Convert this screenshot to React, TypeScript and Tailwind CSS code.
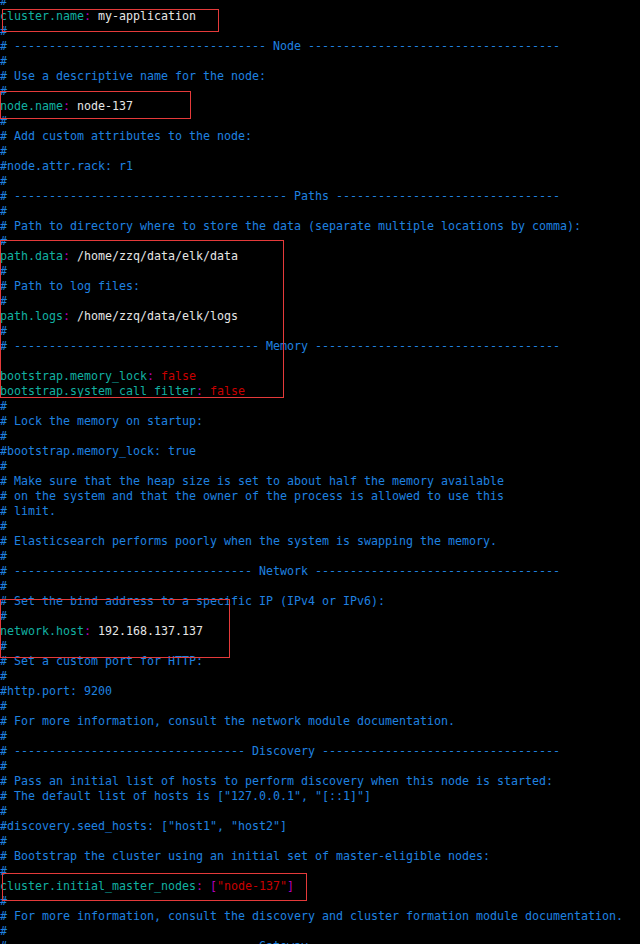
import React from "react";

type Seg = { t: string; c: "c" | "k" | "p" | "v" | "r" | "m" };

const colors: Record<Seg["c"], string> = {
  c: "text-[#1f82e0]",
  k: "text-[#12b0a2]",
  p: "text-[#b400bb]",
  v: "text-[#e6e6e6]",
  r: "text-[#c80000]",
  m: "text-[#b400bb]",
};

const dash = (n: number) => "-".repeat(n);
const header = (before: number, title: string, after: number): Seg[] => [
  { t: `# ${dash(before)} ${title} ${dash(after)}`, c: "c" },
];
const cm = (t: string): Seg[] => [{ t, c: "c" }];
const kv = (k: string, v: string, red = false): Seg[] => [
  { t: k, c: "k" },
  { t: ":", c: "p" },
  { t: " ", c: "v" },
  { t: v, c: red ? "r" : "v" },
];

const lines: Seg[][] = [
  cm("#"),
  kv("cluster.name", "my-application"),
  cm("#"),
  header(36, "Node", 36),
  cm("#"),
  cm("# Use a descriptive name for the node:"),
  cm("#"),
  kv("node.name", "node-137"),
  cm("#"),
  cm("# Add custom attributes to the node:"),
  cm("#"),
  cm("#node.attr.rack: r1"),
  cm("#"),
  header(39, "Paths", 32),
  cm("#"),
  cm("# Path to directory where to store the data (separate multiple locations by comma):"),
  cm("#"),
  kv("path.data", "/home/zzq/data/elk/data"),
  cm("#"),
  cm("# Path to log files:"),
  cm("#"),
  kv("path.logs", "/home/zzq/data/elk/logs"),
  cm("#"),
  header(35, "Memory", 35),
  [],
  kv("bootstrap.memory_lock", "false", true),
  kv("bootstrap.system call filter", "false", true),
  cm("#"),
  cm("# Lock the memory on startup:"),
  cm("#"),
  cm("#bootstrap.memory_lock: true"),
  cm("#"),
  cm("# Make sure that the heap size is set to about half the memory available"),
  cm("# on the system and that the owner of the process is allowed to use this"),
  cm("# limit."),
  cm("#"),
  cm("# Elasticsearch performs poorly when the system is swapping the memory."),
  cm("#"),
  header(34, "Network", 35),
  cm("#"),
  cm("# Set the bind address to a specific IP (IPv4 or IPv6):"),
  cm("#"),
  kv("network.host", "192.168.137.137"),
  cm("#"),
  cm("# Set a custom port for HTTP:"),
  cm("#"),
  cm("#http.port: 9200"),
  cm("#"),
  cm("# For more information, consult the network module documentation."),
  cm("#"),
  header(33, "Discovery", 34),
  cm("#"),
  cm("# Pass an initial list of hosts to perform discovery when this node is started:"),
  cm('# The default list of hosts is ["127.0.0.1", "[::1]"]'),
  cm("#"),
  cm('#discovery.seed_hosts: ["host1", "host2"]'),
  cm("#"),
  cm("# Bootstrap the cluster using an initial set of master-eligible nodes:"),
  cm("#"),
  [
    { t: "cluster.initial_master_nodes", c: "k" },
    { t: ":", c: "p" },
    { t: " ", c: "v" },
    { t: "[", c: "m" },
    { t: '"node-137"', c: "r" },
    { t: "]", c: "m" },
  ],
  cm("#"),
  cm("# For more information, consult the discovery and cluster formation module documentation."),
  cm("#"),
  header(34, "Gateway", 35),
];

const App = () => {
  return (
    <div className="relative w-[640px] h-[944px] overflow-hidden bg-black">
      <div className="mt-[-6.5px] font-['DejaVu_Sans_Mono',monospace] text-[11.63px] leading-[15px]">
        {lines.map((segs, i) => (
          <div key={i} className="h-[15px] whitespace-pre">
            {segs.map((s, j) => (
              <span key={j} className={colors[s.c]}>
                {s.t}
              </span>
            ))}
          </div>
        ))}
      </div>

      {/* highlight boxes drawn over the text */}
      <div className="absolute left-[2px] top-[9px] w-[217px] h-[23px] border border-[#e53a3a]" />
      <div className="absolute left-0 top-[91px] w-[191px] h-[28px] border border-[#e53a3a]" />
      <div className="absolute left-0 top-[240px] w-[284px] h-[158px] border border-[#e53a3a]" />
      <div className="absolute left-0 top-[599px] w-[230px] h-[59px] border border-[#e53a3a]" />
      <div className="absolute left-[2px] top-[873px] w-[305px] h-[28px] border border-[#e53a3a]" />
    </div>
  );
};

export default App;
